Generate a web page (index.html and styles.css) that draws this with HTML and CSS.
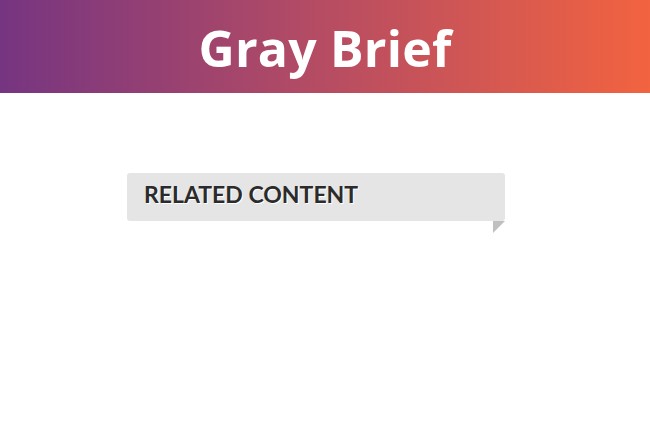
FILE: index.html
```html
<!DOCTYPE html>
<html>
<head>
<meta charset="utf-8">
<link rel="stylesheet" href="styles.css">
</head>
<body>
<header class="hero">
  <h1 class="hero-title">Gray Brief</h1>
</header>
<main class="content">
  <section class="related">
    <div class="related-bar">
      <h2 class="related-title">RELATED CONTENT</h2>
    </div>
    <div class="related-fold"></div>
  </section>
</main>
</body>
</html>
```

FILE: styles.css
```css
html, body {
  margin: 0;
  padding: 0;
  background: #ffffff;
}
body {
  font-family: "Open Sans", sans-serif;
}
.hero {
  height: 93px;
  background: linear-gradient(to right, #763581 0%, #b04a66 45%, #f26340 100%);
  display: flex;
  align-items: center;
  justify-content: center;
}
.hero-title {
  margin: 0;
  color: #ffffff;
  font-family: "Open Sans", sans-serif;
  font-weight: 700;
  font-size: 50px;
  letter-spacing: 0.2px;
  line-height: 1;
  padding-top: 2px;
}
.content {
  padding: 80px 0 0 127px;
}
.related {
  width: 378px;
  display: flex;
  flex-direction: column;
  align-items: flex-end;
}
.related-bar {
  width: 100%;
  box-sizing: border-box;
  height: 48px;
  background: #e5e5e5;
  border-radius: 3px;
  padding: 8px 17px;
}
.related-title {
  margin: 0;
  font-family: "Lato", sans-serif;
  font-weight: 700;
  font-size: 23px;
  line-height: 26px;
  color: #2b2b2b;
  text-shadow: 1px 1px 0 #ffffff;
}
.related-fold {
  width: 0;
  height: 0;
  border-top: 12px solid #c0c0c0;
  border-right: 12px solid transparent;
}
```
